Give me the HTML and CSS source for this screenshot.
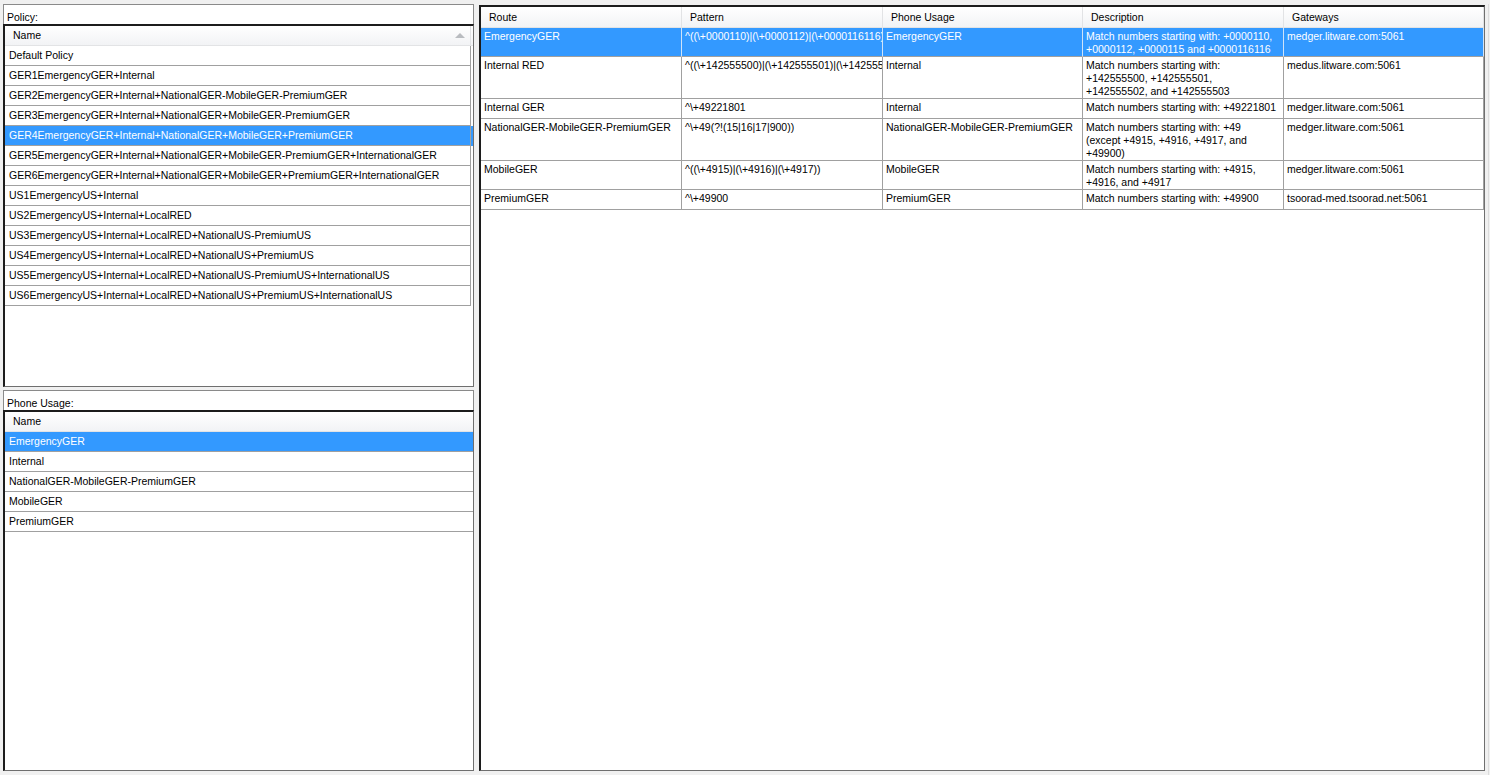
FILE: index.html
```html
<!DOCTYPE html>
<html>
<head>
<meta charset="utf-8">
<link rel="stylesheet" href="styles.css">
</head>
<body>
<div class="app">
  <div class="left">
    <div class="panel policy">
      <div class="label">Policy:</div>
      <div class="list">
        <div class="lhead"><div class="lhcell">Name<span class="sort"></span></div></div>
        <div class="lrow"><div class="lcell">Default Policy</div></div>
        <div class="lrow"><div class="lcell">GER1EmergencyGER+Internal</div></div>
        <div class="lrow"><div class="lcell">GER2EmergencyGER+Internal+NationalGER-MobileGER-PremiumGER</div></div>
        <div class="lrow"><div class="lcell">GER3EmergencyGER+Internal+NationalGER+MobileGER-PremiumGER</div></div>
        <div class="lrow sel"><div class="lcell">GER4EmergencyGER+Internal+NationalGER+MobileGER+PremiumGER</div></div>
        <div class="lrow"><div class="lcell">GER5EmergencyGER+Internal+NationalGER+MobileGER-PremiumGER+InternationalGER</div></div>
        <div class="lrow"><div class="lcell">GER6EmergencyGER+Internal+NationalGER+MobileGER+PremiumGER+InternationalGER</div></div>
        <div class="lrow"><div class="lcell">US1EmergencyUS+Internal</div></div>
        <div class="lrow"><div class="lcell">US2EmergencyUS+Internal+LocalRED</div></div>
        <div class="lrow"><div class="lcell">US3EmergencyUS+Internal+LocalRED+NationalUS-PremiumUS</div></div>
        <div class="lrow"><div class="lcell">US4EmergencyUS+Internal+LocalRED+NationalUS+PremiumUS</div></div>
        <div class="lrow"><div class="lcell">US5EmergencyUS+Internal+LocalRED+NationalUS-PremiumUS+InternationalUS</div></div>
        <div class="lrow"><div class="lcell">US6EmergencyUS+Internal+LocalRED+NationalUS+PremiumUS+InternationalUS</div></div>
      </div>
    </div>
    <div class="panel usage">
      <div class="label">Phone Usage:</div>
      <div class="list">
        <div class="lhead"><div class="lhcell full">Name</div></div>
        <div class="lrow sel"><div class="lcell full">EmergencyGER</div></div>
        <div class="lrow"><div class="lcell full">Internal</div></div>
        <div class="lrow"><div class="lcell full">NationalGER-MobileGER-PremiumGER</div></div>
        <div class="lrow"><div class="lcell full">MobileGER</div></div>
        <div class="lrow"><div class="lcell full">PremiumGER</div></div>
      </div>
    </div>
  </div>
  <div class="right">
    <div class="grid">
      <div class="th">Route</div>
      <div class="th">Pattern</div>
      <div class="th">Phone Usage</div>
      <div class="th">Description</div>
      <div class="th">Gateways</div>

      <div class="td sel">EmergencyGER</div>
      <div class="td sel">^((\+0000110)|(\+0000112)|(\+0000116116)|(\+0000115))</div>
      <div class="td sel">EmergencyGER</div>
      <div class="td sel">Match numbers starting with: +0000110,<br>+0000112, +0000115 and +0000116116</div>
      <div class="td sel">medger.litware.com:5061</div>

      <div class="td">Internal RED</div>
      <div class="td">^((\+142555500)|(\+142555501)|(\+142555502)|(\+142555503))</div>
      <div class="td">Internal</div>
      <div class="td">Match numbers starting with:<br>+142555500, +142555501,<br>+142555502, and +142555503</div>
      <div class="td">medus.litware.com:5061</div>

      <div class="td">Internal GER</div>
      <div class="td">^\+49221801</div>
      <div class="td">Internal</div>
      <div class="td">Match numbers starting with: +49221801</div>
      <div class="td">medger.litware.com:5061</div>

      <div class="td">NationalGER-MobileGER-PremiumGER</div>
      <div class="td">^\+49(?!(15|16|17|900))</div>
      <div class="td">NationalGER-MobileGER-PremiumGER</div>
      <div class="td">Match numbers starting with: +49<br>(except +4915, +4916, +4917, and<br>+49900)</div>
      <div class="td">medger.litware.com:5061</div>

      <div class="td">MobileGER</div>
      <div class="td">^((\+4915)|(\+4916)|(\+4917))</div>
      <div class="td">MobileGER</div>
      <div class="td">Match numbers starting with: +4915,<br>+4916, and +4917</div>
      <div class="td">medger.litware.com:5061</div>

      <div class="td">PremiumGER</div>
      <div class="td">^\+49900</div>
      <div class="td">PremiumGER</div>
      <div class="td">Match numbers starting with: +49900</div>
      <div class="td">tsoorad-med.tsoorad.net:5061</div>
    </div>
  </div>
  <div class="edge"></div>
</div>
</body>
</html>
```

FILE: styles.css
```css
* { box-sizing: border-box; }
html, body { margin: 0; padding: 0; }
body {
  width: 1490px;
  height: 775px;
  background: #f0f0f0;
  font-family: "Liberation Sans", Arial, sans-serif;
  font-size: 10.5px;
  color: #000;
  overflow: hidden;
}
.app {
  display: flex;
  gap: 5px;
  padding: 4px 0 0 3px;
  height: 771px;
}
.left {
  width: 471px;
  display: flex;
  flex-direction: column;
  gap: 3px;
}
.panel {
  display: flex;
  flex-direction: column;
  background: #fff;
}
.policy { height: 383px; }
.usage { height: 381px; }
.label {
  height: 20px;
  border: 1px solid #8a8a8a;
  border-bottom: none;
  padding: 6px 0 0 3px;
  line-height: 13px;
}
.list {
  flex: 1;
  background: #fff;
  border-top: 2px solid #1c1c1c;
  border-left: 2px solid #1c1c1c;
  border-right: 1px solid #6f6f6f;
  border-bottom: 1px solid #6f6f6f;
  overflow: hidden;
}
.lhead {
  height: 20px;
  background: linear-gradient(#ffffff, #f2f3f5);
  border-bottom: 1px solid #e2e3e5;
}
.lhcell {
  position: relative;
  width: 466px;
  height: 19px;
  line-height: 19px;
  padding-left: 8px;
  border-right: 1px solid #e2e3e5;
}
.lhcell.full, .lcell.full { width: auto; border-right: none; }
.sort {
  position: absolute;
  right: 5px;
  top: 7px;
  width: 0;
  height: 0;
  border-left: 5px solid transparent;
  border-right: 5px solid transparent;
  border-bottom: 5px solid #b9bcc0;
}
.lrow {
  height: 20px;
}
.lcell {
  width: 466px;
  height: 20px;
  line-height: 19px;
  padding-left: 4px;
  border-bottom: 1px solid #a0a0a0;
  border-right: 1px solid #a0a0a0;
  white-space: nowrap;
  overflow: hidden;
}
.lrow.sel { background: #3399ff; color: #fff; }

.right {
  width: 1006px;
  height: 766px;
  margin-top: 1px;
  background: #fff;
  border-top: 2px solid #1c1c1c;
  border-left: 2px solid #1c1c1c;
  border-right: 1px solid #6f6f6f;
  border-bottom: 1px solid #6f6f6f;
  overflow: hidden;
}
.grid {
  display: grid;
  grid-template-columns: 201px 201px 200px 201px 200px;
  align-content: start;
}
.th {
  height: 21px;
  line-height: 21px;
  padding-left: 8px;
  background: linear-gradient(#ffffff, #f2f3f5);
  border-right: 1px solid #e2e3e5;
  border-bottom: 1px solid #e2e3e5;
  white-space: nowrap;
}
.td {
  min-height: 20px;
  padding: 2px 2px 0 3px;
  line-height: 13px;
  border-right: 1px solid #a0a0a0;
  border-bottom: 1px solid #a0a0a0;
  white-space: nowrap;
  overflow: hidden;
}
.td.sel { background: #3399ff; color: #fff; border-right-color: #cfe3f8; }
.edge {
  width: 1px;
  height: 771px;
  margin-left: -2px;
  background: #dcdcdc;
}
```
